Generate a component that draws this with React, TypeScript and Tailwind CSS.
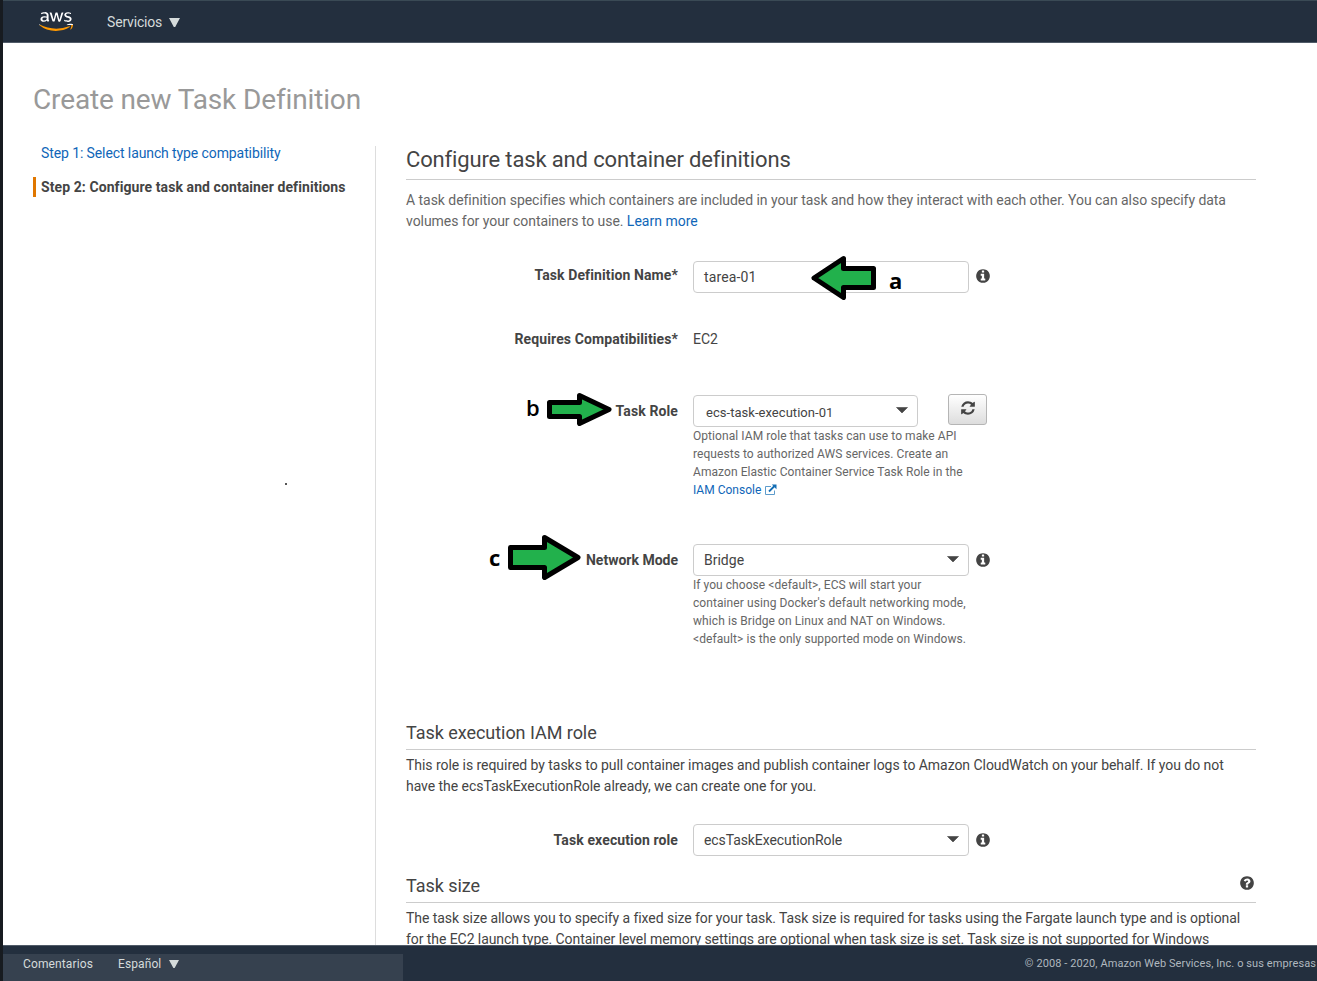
import type { ReactNode } from "react";
import { FaAws } from "react-icons/fa";

const disc = "q0 209-103 385.5t-279.5 279.5-385.5 103-385.5-103-279.5-279.5-103-385.5 103-385.5 279.5-279.5 385.5-103 385.5 103 279.5 279.5 103 385.5z";

function InfoIcon() {
  return (
    <svg className="ml-[6px] size-[16px] shrink-0" viewBox="0 0 1792 1792" fill="#444">
      <path
        d={
          "M1152 1376v-160q0-14-9-23t-23-9h-96v-512q0-14-9-23t-23-9h-320q-14 0-23 9t-9 23v160q0 14 9 23t23 9h96v320h-96q-14 0-23 9t-9 23v160q0 14 9 23t23 9h448q14 0 23-9t9-23zm-128-896v-160q0-14-9-23t-23-9h-192q-14 0-23 9t-9 23v160q0 14 9 23t23 9h192q14 0 23-9t9-23zm640 416" +
          disc
        }
      />
    </svg>
  );
}

function HelpIcon() {
  return (
    <svg className="mt-px size-[16px] shrink-0" viewBox="0 0 1792 1792" fill="#444">
      <path
        d={
          "M1024 1376v-192q0-14-9-23t-23-9h-192q-14 0-23 9t-9 23v192q0 14 9 23t23 9h192q14 0 23-9t9-23zm256-672q0-88-55.5-163t-138.5-116-170-41q-243 0-371 213-15 24 8 42l132 100q7 6 19 6 16 0 25-12 53-68 86-92 34-24 86-24 48 0 85.5 26t37.5 59q0 38-20 61t-68 45q-63 28-115.5 86.5t-52.5 125.5v36q0 14 9 23t23 9h192q14 0 23-9t9-23q0-19 21.5-49.5t54.5-49.5q32-18 49-28.5t46-35 44.5-48 28-60.5 12.5-81zm384 192" +
          disc
        }
      />
    </svg>
  );
}

function RefreshIcon() {
  return (
    <svg className="mb-[3px] size-[16px]" viewBox="0 0 1792 1792" fill="#444">
      <path d="M1639 1056q0 5-1 7-64 268-268 434.5t-478 166.5q-146 0-282.5-55t-243.5-157l-129 129q-19 19-45 19t-45-19-19-45v-448q0-26 19-45t45-19h448q26 0 45 19t19 45-19 45l-137 137q71 66 161 102t187 36q134 0 250-65t186-179q11-17 53-117 8-23 30-23h192q13 0 22.5 9.5t9.5 22.5zm25-800v448q0 26-19 45t-45 19h-448q-26 0-45-19t-19-45 19-45l138-138q-148-137-349-137-134 0-250 65t-186 179q-11 17-53 117-8 23-30 23h-199q-13 0-22.5-9.5t-9.5-22.5v-7q65-268 270-434.5t480-166.5q146 0 284 55.5t245 156.5l130-129q19-19 45-19t45 19 19 45z" />
    </svg>
  );
}

function ExternalIcon() {
  return (
    <svg className="size-[12px]" viewBox="0 0 12 12" fill="none">
      <path d="M6 2.5H0.5V10.5H9.5V6.5" stroke="#5d9ccc" />
      <path d="M4 7.5L9.5 2" stroke="#146eb4" strokeWidth="1.8" />
      <path d="M6.8 0.5H11.5V5.2Z" fill="#146eb4" />
    </svg>
  );
}

function Caret() {
  return (
    <svg className="mb-[2px] h-[6px] w-[12px] shrink-0" viewBox="0 0 12 6">
      <path d="M0.5 0.5H11.5L6 6Z" fill="#444" stroke="#444" strokeWidth="0.6" />
    </svg>
  );
}

function MenuArrow({ className }: { className: string }) {
  return (
    <svg className={className} viewBox="0 0 11 9" preserveAspectRatio="none">
      <path d="M0 0H11L6.2 9H4.8Z" fill="#d5dbdb" />
    </svg>
  );
}

function AwsLogo() {
  return (
    <div className="h-[23px] w-[34px]">
      <svg className="size-0">
        <linearGradient id="aws-fill" x1="0" y1="32" x2="0" y2="480" gradientUnits="userSpaceOnUse">
          <stop offset="0.64" stopColor="#fff" />
          <stop offset="0.64" stopColor="#f90" />
        </linearGradient>
      </svg>
      <FaAws className="mt-[-1px] h-[25px] w-[34px]" preserveAspectRatio="none" fill="url(#aws-fill)" />
    </div>
  );
}

type ArrowProps = { className: string; flip?: boolean; w: number; h: number; head: number; shaft: number };

function Arrow({ className, flip, w, h, head, shaft }: ArrowProps) {
  const top = (h - shaft) / 2 + 2.5;
  const neck = w - head + 2.5;
  return (
    <svg className={className} width={w} height={h} viewBox={`0 0 ${w} ${h}`}>
      <path
        transform={flip ? `translate(${w} 0) scale(-1 1)` : undefined}
        d={`M2.5 ${top}H${neck}V2.5L${w - 3} ${h / 2}L${neck} ${h - 2.5}V${h - top}H2.5Z`}
        fill="#22b14c"
        stroke="#000"
        strokeWidth="5"
        strokeLinejoin="round"
      />
    </svg>
  );
}

function Label({ children }: { children: ReactNode }) {
  return <div className="w-[272px] shrink-0 text-right font-bold tracking-[0.11px]">{children}</div>;
}

export default function App() {
  return (
    <div className="relative flex h-[981px] w-[1317px] flex-col overflow-hidden border-l-[3px] border-[#171b20] bg-white font-['Roboto',sans-serif] text-[14px] leading-[21px] text-[#444]">
      <header className="flex h-[43px] shrink-0 items-center border-t border-b border-t-[#3a4a55] border-b-[#505b68] bg-[#232f3e] pl-[36px] text-[#d5dbdb]">
        <AwsLogo />
        <div className="ml-[34px] flex items-center gap-[7px] pt-[1px]">
          <span className="w-[55px] tracking-[-0.18px] whitespace-nowrap">Servicios</span>
          <MenuArrow className="h-[9px] w-[11px]" />
        </div>
      </header>

      <main className="flex h-[902px] shrink-0 flex-col overflow-hidden">
        <h1 className="mt-[39px] ml-[30px] text-[28px] leading-[36px] tracking-[-0.14px] whitespace-nowrap text-[#999]">Create new Task Definition</h1>
        <div className="mt-[28px] flex flex-1">
          <nav className="w-[373px] shrink-0 border-r border-[#ddd] pl-[30px] whitespace-nowrap">
            <div className="mt-[-3px] pl-[8px] tracking-[-0.1px] text-[#0f66b8]">Step 1: Select launch type compatibility</div>
            <div className="mt-[13px] h-[20px] border-l-[3px] border-[#e07700] pl-[5px] leading-[20px] font-bold tracking-[0.085px]">Step 2: Configure task and container definitions</div>
          </nav>

          <section className="ml-[30px] w-[850px] shrink-0 whitespace-nowrap">
            <h2 className="h-[34px] border-b border-[#ccc] pt-px text-[22px] leading-[26px] tracking-[-0.15px]">Configure task and container definitions</h2>
            <p className="mt-[10px] tracking-[-0.042px] text-[#666]">
              A task definition specifies which containers are included in your task and how they interact with each other. You can also specify data
              <br />
              volumes for your containers to use. <span className="tracking-normal text-[#0f66b8]">Learn more</span>
            </p>

            <div className="mt-[29px] flex h-[32px] items-center">
              <div className="mb-[4px]">
                <Label>Task Definition Name*</Label>
              </div>
              <div className="ml-[15px] flex h-[32px] w-[276px] items-center rounded-[4px] border border-[#ccc] pl-[10px] tracking-[0.13px]">tarea-01</div>
              <div className="mb-[2px]">
                <InfoIcon />
              </div>
            </div>
            <div className="mt-[36px] flex h-[21px]">
              <Label>Requires Compatibilities*</Label>
              <div className="ml-[15px]">EC2</div>
            </div>
            <div className="mt-[45px] flex h-[32px] items-center">
              <Label>Task Role</Label>
              <div className="ml-[15px] flex h-[32px] w-[225px] items-center justify-between rounded-[4px] border border-[#ccc] pr-[9px] pl-[12px] text-[13px]">
                <span className="mt-[2px] tracking-[0.04px]">ecs-task-execution-01</span>
                <Caret />
              </div>
              <div className="mb-[3px] ml-[30px] flex h-[31px] w-[39px] items-center justify-center rounded-[3px] border border-[#b5b5b5] bg-gradient-to-b from-white to-[#ddd]">
                <RefreshIcon />
              </div>
            </div>
            <div className="ml-[287px] text-[12px] leading-[18px] tracking-[0.065px] text-[#666]">
              Optional IAM role that tasks can use to make API
              <br />
              requests to authorized AWS services. Create an
              <br />
              Amazon Elastic Container Service Task Role in the
              <br />
              <span className="flex items-center gap-[4px] tracking-normal text-[#0f66b8]">
                IAM Console
                <ExternalIcon />
              </span>
            </div>
            <div className="mt-[45px] flex h-[32px] items-center">
              <Label>
                <span className="tracking-normal">Network Mode</span>
              </Label>
              <div className="ml-[15px] flex h-[32px] w-[276px] items-center justify-between rounded-[4px] border border-[#ccc] pr-[9px] pl-[10px]">
                <span>Bridge</span>
                <Caret />
              </div>
              <InfoIcon />
            </div>
            <div className="ml-[287px] text-[12px] leading-[18px] tracking-[0.08px] text-[#666]">
              <span className="tracking-[0.05px]">If you choose &lt;default&gt;, ECS will start your</span>
              <br />
              container using Docker's default networking mode,
              <br />
              which is Bridge on Linux and NAT on Windows.
              <br />
              &lt;default&gt; is the only supported mode on Windows.
            </div>

            <h3 className="mt-[73px] h-[29px] border-b border-[#ccc] text-[18px] leading-[24px] tracking-[-0.04px]">Task execution IAM role</h3>
            <p className="mt-[5px] tracking-[-0.05px]">
              This role is required by tasks to pull container images and publish container logs to Amazon CloudWatch on your behalf. If you do not
              <br />
              have the ecsTaskExecutionRole already, we can create one for you.
            </p>
            <div className="mt-[27px] flex h-[32px] items-center">
              <Label>Task execution role</Label>
              <div className="ml-[15px] flex h-[32px] w-[276px] items-center justify-between rounded-[4px] border border-[#ccc] pr-[9px] pl-[10px]">
                <span className="tracking-[-0.09px]">ecsTaskExecutionRole</span>
                <Caret />
              </div>
              <InfoIcon />
            </div>
            <div className="mt-[18px] flex h-[29px] justify-between border-b border-[#ccc] pr-px">
              <h3 className="text-[18px] leading-[24px] tracking-[-0.04px]">Task size</h3>
              <HelpIcon />
            </div>
            <p className="mt-[5px] tracking-[-0.062px]">
              The task size allows you to specify a fixed size for your task. Task size is required for tasks using the Fargate launch type and is optional
              <br />
              <span className="tracking-[-0.07px]">for the EC2 launch type. Container level memory settings are optional when task size is set. Task size is not supported for Windows</span>
            </p>
          </section>
        </div>
      </main>

      <footer className="flex h-[36px] shrink-0 justify-between border-t border-[#505b68] bg-[#232f3e] text-[12px] leading-[18px] whitespace-nowrap text-[#d5dbdb]">
        <div className="mt-[8px] flex h-[28px] w-[400px] bg-[#36414f] pt-px pl-[20px]">
          <span className="w-[95px] tracking-[0.12px]">Comentarios</span>
          <span className="w-[51px] tracking-[0.1px]">Español</span>
          <MenuArrow className="mt-[5px] h-[8px] w-[10px]" />
        </div>
        <div className="mt-[9px] pr-[1px] text-[11px] tracking-[0.09px] text-[#b0b8bf]">© 2008 - 2020, Amazon Web Services, Inc. o sus empresas</div>
      </footer>

      <div className="font-['Open_Sans',sans-serif] text-[22px] leading-[22px] font-semibold text-black">
        <Arrow className="absolute top-[256px] left-[808px]" flip w={65} h={44} head={35} shaft={24} />
        <span className="absolute top-[269px] left-[886px] font-bold">a</span>
        <Arrow className="absolute top-[393px] left-[544px]" w={65} h={33} head={35} shaft={19} />
        <span className="absolute top-[396px] left-[523px]">b</span>
        <Arrow className="absolute top-[535px] left-[505px]" w={73} h={45} head={39} shaft={25} />
        <span className="absolute top-[546px] left-[486px] font-bold">c</span>
        <i className="absolute top-[483px] left-[282px] size-[2px] bg-[#555]" />
      </div>
    </div>
  );
}
